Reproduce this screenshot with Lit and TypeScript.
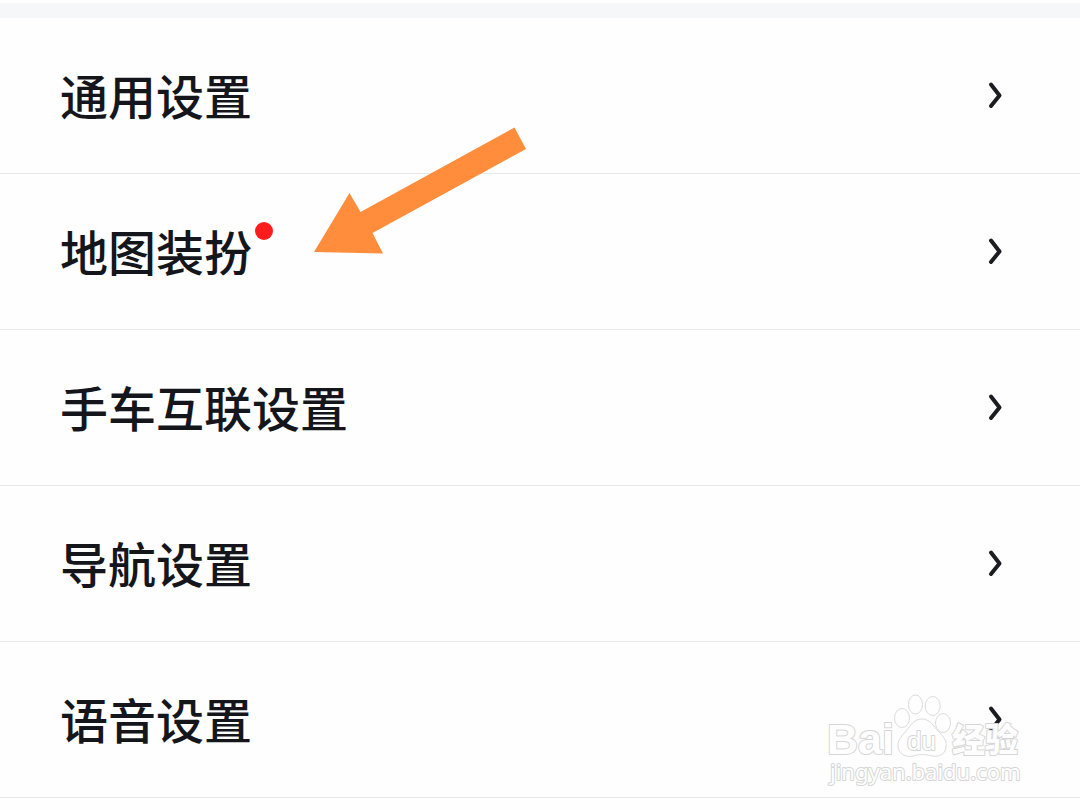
import { LitElement, html, css, svg } from "lit";
import { customElement, property } from "lit/decorators.js";

interface Setting {
  label: string;
  isNew?: boolean;
}

const SETTINGS: Setting[] = [
  { label: "通用设置" },
  { label: "地图装扮", isNew: true },
  { label: "手车互联设置" },
  { label: "导航设置" },
  { label: "语音设置" },
];

@customElement("setting-row")
export class SettingRow extends LitElement {
  @property() label = "";
  @property({ type: Boolean }) isNew = false;

  static styles = css`
    :host {
      display: block;
    }
    .row {
      box-sizing: border-box;
      display: flex;
      align-items: flex-start;
      justify-content: space-between;
      width: 100%;
      padding: 40px 72px 43px 60px;
      border: 0;
      border-bottom: 1px solid #e6e9ea;
      background: none;
      color: #14161c;
      font: 500 48px/72px "Noto Sans CJK SC", sans-serif;
      text-align: left;
      cursor: pointer;
    }
    .label {
      position: relative;
    }
    .dot {
      position: absolute;
      left: 100%;
      top: 8px;
      margin-left: 3px;
      width: 18px;
      height: 18px;
      border-radius: 50%;
      background: #fe1c1c;
    }
    .chevron {
      width: 24px;
      height: 36px;
      margin-top: 20px;
      fill: none;
      stroke: #1b1d22;
      stroke-width: 4;
      stroke-linecap: round;
      stroke-linejoin: round;
    }
  `;

  render() {
    return html`
      <button class="row" type="button">
        <span class="label">${this.label}${this.isNew ? html`<span class="dot"></span>` : null}</span>
        <svg class="chevron" viewBox="0 0 24 36" aria-hidden="true">
          <path d="M7 6.500 L15.500 17.500 L7 28" />
        </svg>
      </button>
    `;
  }
}

@customElement("site-watermark")
export class SiteWatermark extends LitElement {
  static styles = css`
    :host {
      display: block;
    }
    .mark {
      display: block;
      width: 200px;
      height: 104px;
      fill: #fefefe;
      stroke: #dcdcdc;
      stroke-width: 1;
    }
    .text {
      paint-order: stroke;
      stroke: #d6d6d6;
      stroke-width: 2;
      stroke-linejoin: round;
    }
    .brand {
      font: 700 43px "Liberation Sans", sans-serif;
    }
    .du {
      font: 400 26px "Liberation Sans", sans-serif;
    }
    .cjk {
      font: 900 33px "Noto Sans CJK SC", sans-serif;
    }
    .site {
      font: 400 22px "Noto Sans", sans-serif;
    }
  `;

  render() {
    return html`
      <svg class="mark" viewBox="0 0 200 104">
        ${svg`
          <ellipse cx="76" cy="28" rx="7.5" ry="9.5" />
          <ellipse cx="89.5" cy="14.5" rx="7" ry="9.5" />
          <ellipse cx="106.700" cy="16" rx="7.5" ry="9.5" />
          <ellipse cx="117" cy="33" rx="7.5" ry="9.5" />
          <path d="M96 29 C104 29 107 36 112 41 C118 47 121 51 120 57 C119 65 113 67 106 66 C99 64 94 64 87 66 C79 68 72 63 72 56 C72 49 76 46 80 41 C85 35 88 29 96 29 Z" />
          <text class="text brand" x="1" y="64">Bai</text>
          <text class="text du" x="81" y="60">du</text>
          <text class="text cjk" x="126" y="62">经验</text>
          <text class="text site" x="4" y="90">jingyan.baidu.com</text>
        `}
      </svg>
    `;
  }
}

@customElement("app-root")
export class AppRoot extends LitElement {
  static styles = css`
    :host {
      display: block;
      position: relative;
      min-height: 100vh;
      overflow: hidden;
      background: #fefefe;
    }
    .band {
      height: 15px;
      margin-top: 3px;
      background: #f6f7f9;
    }
    .page {
      display: flow-root;
    }
    .arrow {
      position: absolute;
      left: 310px;
      top: 124px;
      width: 220px;
      height: 134px;
      fill: #ff8d3b;
      pointer-events: none;
    }
    .watermark {
      position: absolute;
      right: 54px;
      top: 690px;
      pointer-events: none;
    }
  `;

  render() {
    return html`
      <main class="page">
        <div class="band"></div>
        ${SETTINGS.map(
          (s) => html`<setting-row .label=${s.label} .isNew=${!!s.isNew}></setting-row>`
        )}
      </main>
      <svg class="arrow" viewBox="310 124 220 134" aria-hidden="true">
        <path d="M514.500 127.500 L526 149 L372.500 233 L383 253.500 L314 252 L349.500 193 L360.500 212 Z" />
      </svg>
      <site-watermark class="watermark"></site-watermark>
    `;
  }
}
